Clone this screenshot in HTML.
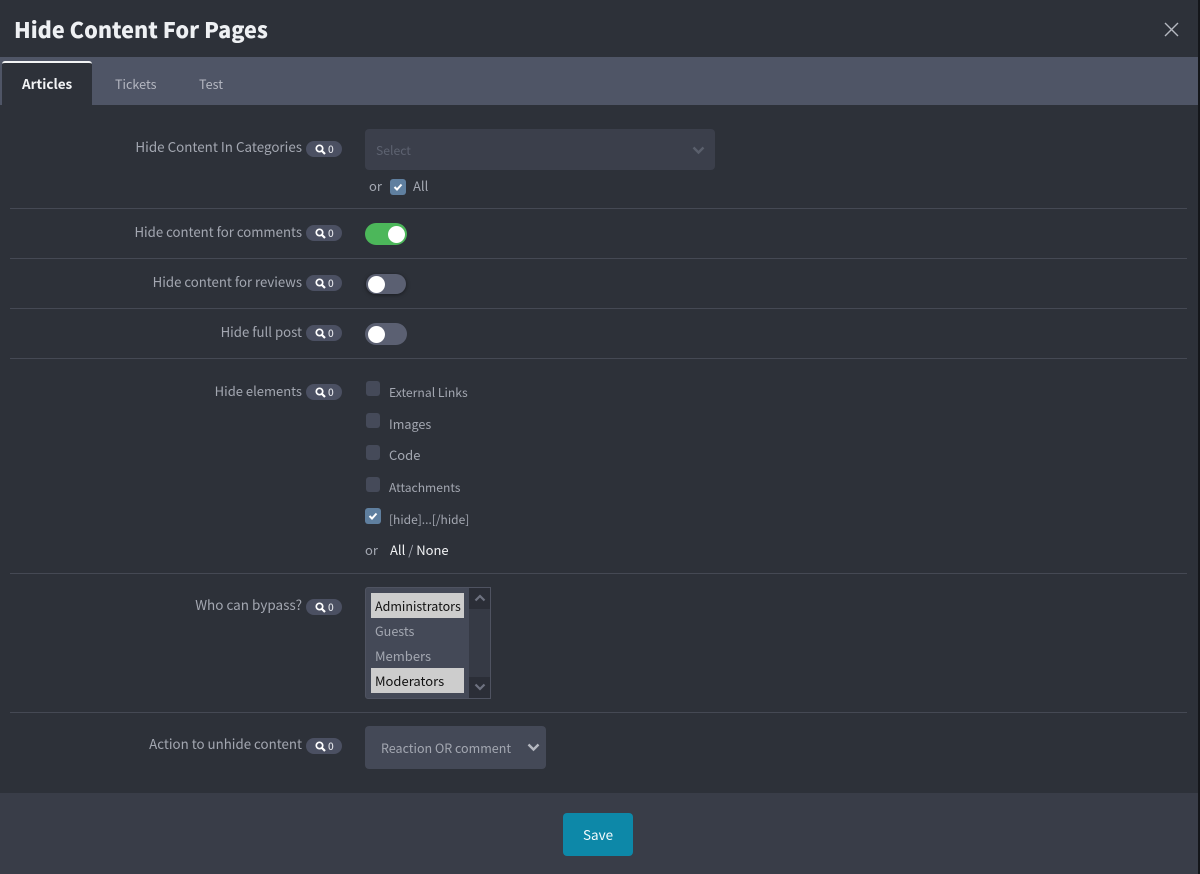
<!DOCTYPE html>
<html>
<head>
<meta charset="utf-8">
<style>
html,body{margin:0;padding:0;background:#14161a;}
body{width:1200px;height:874px;position:relative;overflow:hidden;font-family:"Noto Sans CJK SC","Liberation Sans",sans-serif;font-size:13px;color:#a3a7b1;}
#m{position:absolute;left:0;top:0;width:1198px;height:874px;background:#2d3139;overflow:hidden;}
.a{position:absolute;white-space:nowrap;line-height:18px;}
.r{position:absolute;right:896px;white-space:nowrap;line-height:18px;font-size:13.2px;color:#a3a7b1;}
.hr{position:absolute;left:10px;width:1177px;height:1px;background:#454954;}
.b{position:absolute;left:306px;width:36px;height:16px;border-radius:8px;background:#4b5062;}
.b svg{position:absolute;left:9px;top:3px;}
.b span{position:absolute;left:22px;top:0;font-size:10px;line-height:16px;color:#dfe1e6;font-weight:500;}
.sw{position:absolute;left:365px;width:42px;height:22px;border-radius:11px;background:#5b6072;}
.sw i{position:absolute;top:3px;left:3px;width:17px;height:17px;border-radius:50%;background:#fff;}
.cb{position:absolute;left:366px;width:14px;height:15px;border-radius:3px;background:#454a59;}
.cb.on{left:365px;width:16px;height:16px;background:#5f7f9f;}
.cb svg{position:absolute;left:3px;top:3px;}
.t{font-size:13px;}
</style>
</head>
<body>
<div id="m">
  <div class="a" style="left:14px;top:14px;font-size:21.6px;line-height:32px;font-weight:900;color:#eef0f3;">Hide Content For Pages</div>
  <svg class="a" style="left:1164px;top:22px" width="15" height="15" viewBox="0 0 15 15"><path d="M1 1L14 14M14 1L1 14" stroke="#b5b8c0" stroke-width="1.4" fill="none"/></svg>

  <div class="a" style="left:0;top:57px;width:1198px;height:48px;background:#4f5566;"></div>
  <div class="a" style="left:2px;top:61px;width:90px;height:44px;background:#2d3139;border-top:2px solid #f2f3f5;border-radius:3px 3px 0 0;box-sizing:border-box;"></div>
  <div class="a" style="left:22px;top:74px;font-size:13.5px;font-weight:700;color:#f2f3f5;">Articles</div>
  <div class="a" style="left:115px;top:75px;font-size:12.6px;color:#b4b7c1;">Tickets</div>
  <div class="a" style="left:199px;top:75px;font-size:12.6px;color:#b4b7c1;">Test</div>

  <!-- Row 1 -->
  <div class="r" style="top:137px;font-size:13.4px;">Hide Content In Categories</div>
  <div class="b" style="top:141px;"><svg width="11" height="11" viewBox="0 0 11 11"><circle cx="4.5" cy="4.5" r="3.2" fill="none" stroke="#fff" stroke-width="1.7"/><path d="M7 7L10 10" stroke="#fff" stroke-width="2.2"/></svg><span>0</span></div>
  <div class="a" style="left:365px;top:129px;width:350px;height:41px;border-radius:4px;background:#3b3f4b;"></div>
  <div class="a" style="left:376px;top:141px;font-size:12.2px;color:#5d6270;">Select</div>
  <svg class="a" style="left:692px;top:146px" width="13" height="9" viewBox="0 0 13 9"><path d="M1.500 1.500L6.500 6.500L11.500 1.500" fill="none" stroke="#5a5f6c" stroke-width="2.400"/></svg>
  <div class="a t" style="left:369px;top:177px;">or</div>
  <div class="cb on" style="left:390px;top:179px;"><svg width="10" height="10" viewBox="0 0 10 10"><path d="M1.500 5L4 7.500L8.500 2.500" fill="none" stroke="#fff" stroke-width="2"/></svg></div>
  <div class="a t" style="left:413px;top:177px;">All</div>
  <div class="hr" style="top:208px;"></div>

  <!-- Row 2 -->
  <div class="r" style="top:223px;">Hide content for comments</div>
  <div class="b" style="top:225px;"><svg width="11" height="11" viewBox="0 0 11 11"><circle cx="4.500" cy="4.500" r="3.200" fill="none" stroke="#fff" stroke-width="1.700"/><path d="M7 7L10 10" stroke="#fff" stroke-width="2.200"/></svg><span>0</span></div>
  <div class="sw" style="top:223px;background:#4cb75a;"><i style="left:23px;top:2.500px;"></i></div>
  <div class="hr" style="top:258px;"></div>

  <!-- Row 3 -->
  <div class="r" style="top:273px;">Hide content for reviews</div>
  <div class="b" style="top:275px;"><svg width="11" height="11" viewBox="0 0 11 11"><circle cx="4.500" cy="4.500" r="3.200" fill="none" stroke="#fff" stroke-width="1.700"/><path d="M7 7L10 10" stroke="#fff" stroke-width="2.200"/></svg><span>0</span></div>
  <div class="sw" style="top:274px;left:366px;width:40px;height:20px;box-shadow:0 1px 4px rgba(0,0,0,.45);"><i style="top:2px;left:2px;"></i></div>
  <div class="hr" style="top:308px;"></div>

  <!-- Row 4 -->
  <div class="r" style="top:323px;">Hide full post</div>
  <div class="b" style="top:325px;"><svg width="11" height="11" viewBox="0 0 11 11"><circle cx="4.500" cy="4.500" r="3.200" fill="none" stroke="#fff" stroke-width="1.700"/><path d="M7 7L10 10" stroke="#fff" stroke-width="2.200"/></svg><span>0</span></div>
  <div class="sw" style="top:323px;"><i style="top:2.500px;"></i></div>
  <div class="hr" style="top:358px;"></div>

  <!-- Row 5 -->
  <div class="r" style="top:382px;font-size:13px;">Hide elements</div>
  <div class="b" style="top:384px;"><svg width="11" height="11" viewBox="0 0 11 11"><circle cx="4.500" cy="4.500" r="3.200" fill="none" stroke="#fff" stroke-width="1.700"/><path d="M7 7L10 10" stroke="#fff" stroke-width="2.200"/></svg><span>0</span></div>
  <div class="cb" style="top:381px;"></div><div class="a" style="left:389px;top:383px;font-size:12.200px;">External Links</div>
  <div class="cb" style="top:413px;"></div><div class="a" style="left:389px;top:415px;font-size:12.600px;">Images</div>
  <div class="cb" style="top:445px;"></div><div class="a" style="left:389px;top:446px;">Code</div>
  <div class="cb" style="top:477px;"></div><div class="a" style="left:389px;top:479px;font-size:12.100px;">Attachments</div>
  <div class="cb on" style="top:508px;"><svg width="10" height="10" viewBox="0 0 10 10"><path d="M1.500 5L4 7.500L8.500 2.500" fill="none" stroke="#fff" stroke-width="2"/></svg></div>
  <div class="a" style="left:389px;top:511px;font-size:12px;">[hide]...[/hide]</div>
  <div class="a t" style="left:365px;top:541px;">or</div>
  <div class="a t" style="left:390px;top:541px;color:#f0f1f3;">All <span style="color:#a3a7b1">/</span> None</div>
  <div class="hr" style="top:573px;"></div>

  <!-- Row 6 -->
  <div class="r" style="top:595px;font-size:13.500px;">Who can bypass?</div>
  <div class="b" style="top:599px;"><svg width="11" height="11" viewBox="0 0 11 11"><circle cx="4.500" cy="4.500" r="3.200" fill="none" stroke="#fff" stroke-width="1.700"/><path d="M7 7L10 10" stroke="#fff" stroke-width="2.200"/></svg><span>0</span></div>
  <div class="a" style="left:365px;top:587px;width:126px;height:112px;box-sizing:border-box;background:#444957;border:1px solid #4f5361;border-radius:3px 0 0 3px;"></div>
  <div class="a" style="left:469px;top:588px;width:21px;height:110px;background:#363a45;"></div>
  <div class="a" style="left:469px;top:588px;width:21px;height:21px;background:#2b2e37;"></div>
  <div class="a" style="left:469px;top:677px;width:21px;height:21px;background:#2b2e37;"></div>
  <svg class="a" style="left:474px;top:594px" width="12" height="8" viewBox="0 0 12 8"><path d="M1.500 6.500L6 2L10.500 6.500" fill="none" stroke="#6e7280" stroke-width="2.200"/></svg>
  <svg class="a" style="left:474px;top:683px" width="12" height="8" viewBox="0 0 12 8"><path d="M1.500 1.500L6 6L10.500 1.500" fill="none" stroke="#6e7280" stroke-width="2.200"/></svg>
  <div class="a" style="left:371px;top:593px;width:93px;height:25px;background:#cdcdcd;"></div>
  <div class="a" style="left:371px;top:668px;width:93px;height:25px;background:#cdcdcd;"></div>
  <div class="a" style="left:375px;top:597px;font-size:12.500px;color:#111;">Administrators</div>
  <div class="a" style="left:375px;top:622px;font-size:12.600px;">Guests</div>
  <div class="a t" style="left:375px;top:647px;">Members</div>
  <div class="a t" style="left:375px;top:672px;color:#111;">Moderators</div>
  <div class="hr" style="top:712px;"></div>

  <!-- Row 7 -->
  <div class="r" style="top:735px;font-size:13.300px;">Action to unhide content</div>
  <div class="b" style="top:738px;"><svg width="11" height="11" viewBox="0 0 11 11"><circle cx="4.500" cy="4.500" r="3.200" fill="none" stroke="#fff" stroke-width="1.700"/><path d="M7 7L10 10" stroke="#fff" stroke-width="2.200"/></svg><span>0</span></div>
  <div class="a" style="left:365px;top:726px;width:181px;height:43px;border-radius:4px;background:#444957;"></div>
  <div class="a" style="left:381px;top:739px;font-size:12.500px;color:#a3a7b1;">Reaction OR comment</div>
  <svg class="a" style="left:527px;top:743px" width="13" height="9" viewBox="0 0 13 9"><path d="M1.500 1.500L6.500 6.500L11.500 1.500" fill="none" stroke="#b5b8c0" stroke-width="2.400"/></svg>

  <!-- Footer -->
  <div class="a" style="left:0;top:793px;width:1198px;height:81px;background:#393d48;"></div>
  <div class="a" style="left:563px;top:813px;width:70px;height:43px;border-radius:4px;background:#0d88a8;color:#f4fbfd;font-size:13.500px;line-height:43px;text-align:center;">Save</div>
</div>
</body>
</html>
